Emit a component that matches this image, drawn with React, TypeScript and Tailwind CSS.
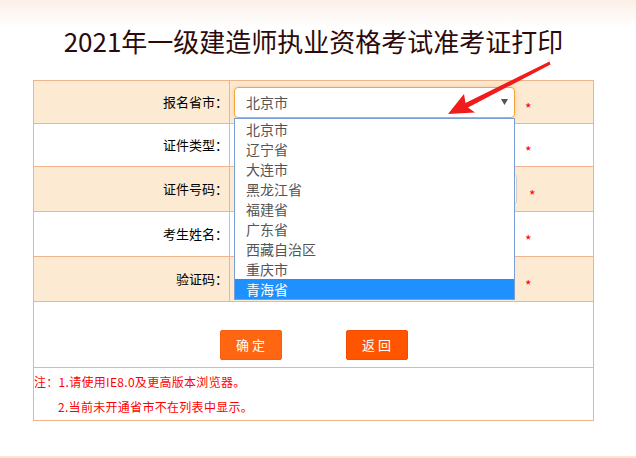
import React from "react";

const provinces = [
  "北京市",
  "辽宁省",
  "大连市",
  "黑龙江省",
  "福建省",
  "广东省",
  "西藏自治区",
  "重庆市",
  "青海省",
];

function Star({ gap = "ml-[10px]" }: { gap?: string }) {
  return (
    <span className={`${gap} translate-y-[6px] text-[14px] leading-none text-[#ff0000]`}>*</span>
  );
}

function Row({
  label,
  shaded,
  height,
  children,
}: {
  label: string;
  shaded?: boolean;
  height: string;
  children: React.ReactNode;
}) {
  return (
    <div
      className={`grid grid-cols-[196px_1fr] border-b border-[#efb48b] ${height} ${
        shaded ? "bg-[#fdead3]" : "bg-white"
      }`}
    >
      <div className="flex items-center justify-end border-r border-[#efb48b] pr-[1px] text-[13px] text-black">
        {label}
      </div>
      <div className="flex items-center pl-[4px]">{children}</div>
    </div>
  );
}

function Box({ w }: { w: string }) {
  return <div className={`h-[31px] ${w} rounded-[4px] border border-[#cccccc] bg-white`} />;
}

export default function App() {
  return (
    <div className="relative h-[458px] w-[636px] overflow-hidden bg-[linear-gradient(to_bottom,#fcf0e8_0px,#ffffff_28px)] font-['Noto_Sans_CJK_SC',sans-serif]">
      <div className="ml-[33px] w-[561px]">
        <h1 className="pb-[21px] pt-[23px] text-center text-[26px] font-normal leading-[36px] text-[#2d0a0a]">
          2021年一级建造师执业资格考试准考证打印
        </h1>

        <div className="border-l border-r border-t border-[#efb48b]">
          <Row label="报名省市：" shaded height="h-[43px]">
            <div className="relative z-10 h-[31px] w-[281px]">
              <div className="flex h-full items-center justify-between rounded-[4px] border border-[#f2a53a] bg-white pl-[11px] pr-[6px] shadow-[0_0_5px_rgba(240,170,90,0.45)]">
                <span className="text-[14px] text-[#555555]">北京市</span>
                <svg width="7" height="6" viewBox="0 0 7 6">
                  <path d="M0 0 H7 L3.5 6 Z" fill="#555555" />
                </svg>
              </div>
              <ul className="absolute left-0 top-[31px] w-full border border-[#7b9ed6] bg-white">
                {provinces.map((p, i) => (
                  <li
                    key={p}
                    className={`h-[20px] pl-[11px] text-[14px] leading-[20px] ${
                      i === provinces.length - 1 ? "bg-[#1e90ff] text-white" : "text-[#555555]"
                    }`}
                  >
                    {p}
                  </li>
                ))}
              </ul>
            </div>
            <Star />
          </Row>
          <Row label="证件类型：" height="h-[43px]">
            <Box w="w-[281px]" />
            <Star />
          </Row>
          <Row label="证件号码：" shaded height="h-[45px]">
            <Box w="w-[283px]" />
            <Star gap="ml-[12px]" />
          </Row>
          <Row label="考生姓名：" height="h-[45px]">
            <Box w="w-[281px]" />
            <Star />
          </Row>
          <Row label="验证码：" shaded height="h-[45px]">
            <Box w="w-[281px]" />
            <Star />
          </Row>

          <div className="flex h-[66px] justify-center gap-[64px] border-b border-[#efb48b] pt-[28px]">
            <button className="h-[30px] w-[62px] rounded-[2px] border border-[#f56010] bg-[#ff6612] text-[13px] text-white">
              确 定
            </button>
            <button className="h-[30px] w-[62px] rounded-[2px] border border-[#f25000] bg-[#ff5500] text-[13px] text-white">
              返 回
            </button>
          </div>

          <div className="h-[53px] border-b border-[#efb48b] pt-[1px] text-[12px] leading-[25px] tracking-[0.3px] text-[#ff0000]">
            <p>注：1.请使用IE8.0及更高版本浏览器。</p>
            <p className="pl-[24px]">2.当前未开通省市不在列表中显示。</p>
          </div>
        </div>
      </div>

      <div className="mt-[35px] border-t-2 border-[#fde4cf]" />

      <svg
        className="pointer-events-none absolute left-0 top-0 z-20"
        width="636"
        height="458"
        viewBox="0 0 636 458"
      >
        <polygon
          points="448,114 464,94 465.5,103 549.5,61.5 550.5,64.5 468,107.5 475,112.5"
          fill="#f01c1c"
        />
      </svg>
    </div>
  );
}
